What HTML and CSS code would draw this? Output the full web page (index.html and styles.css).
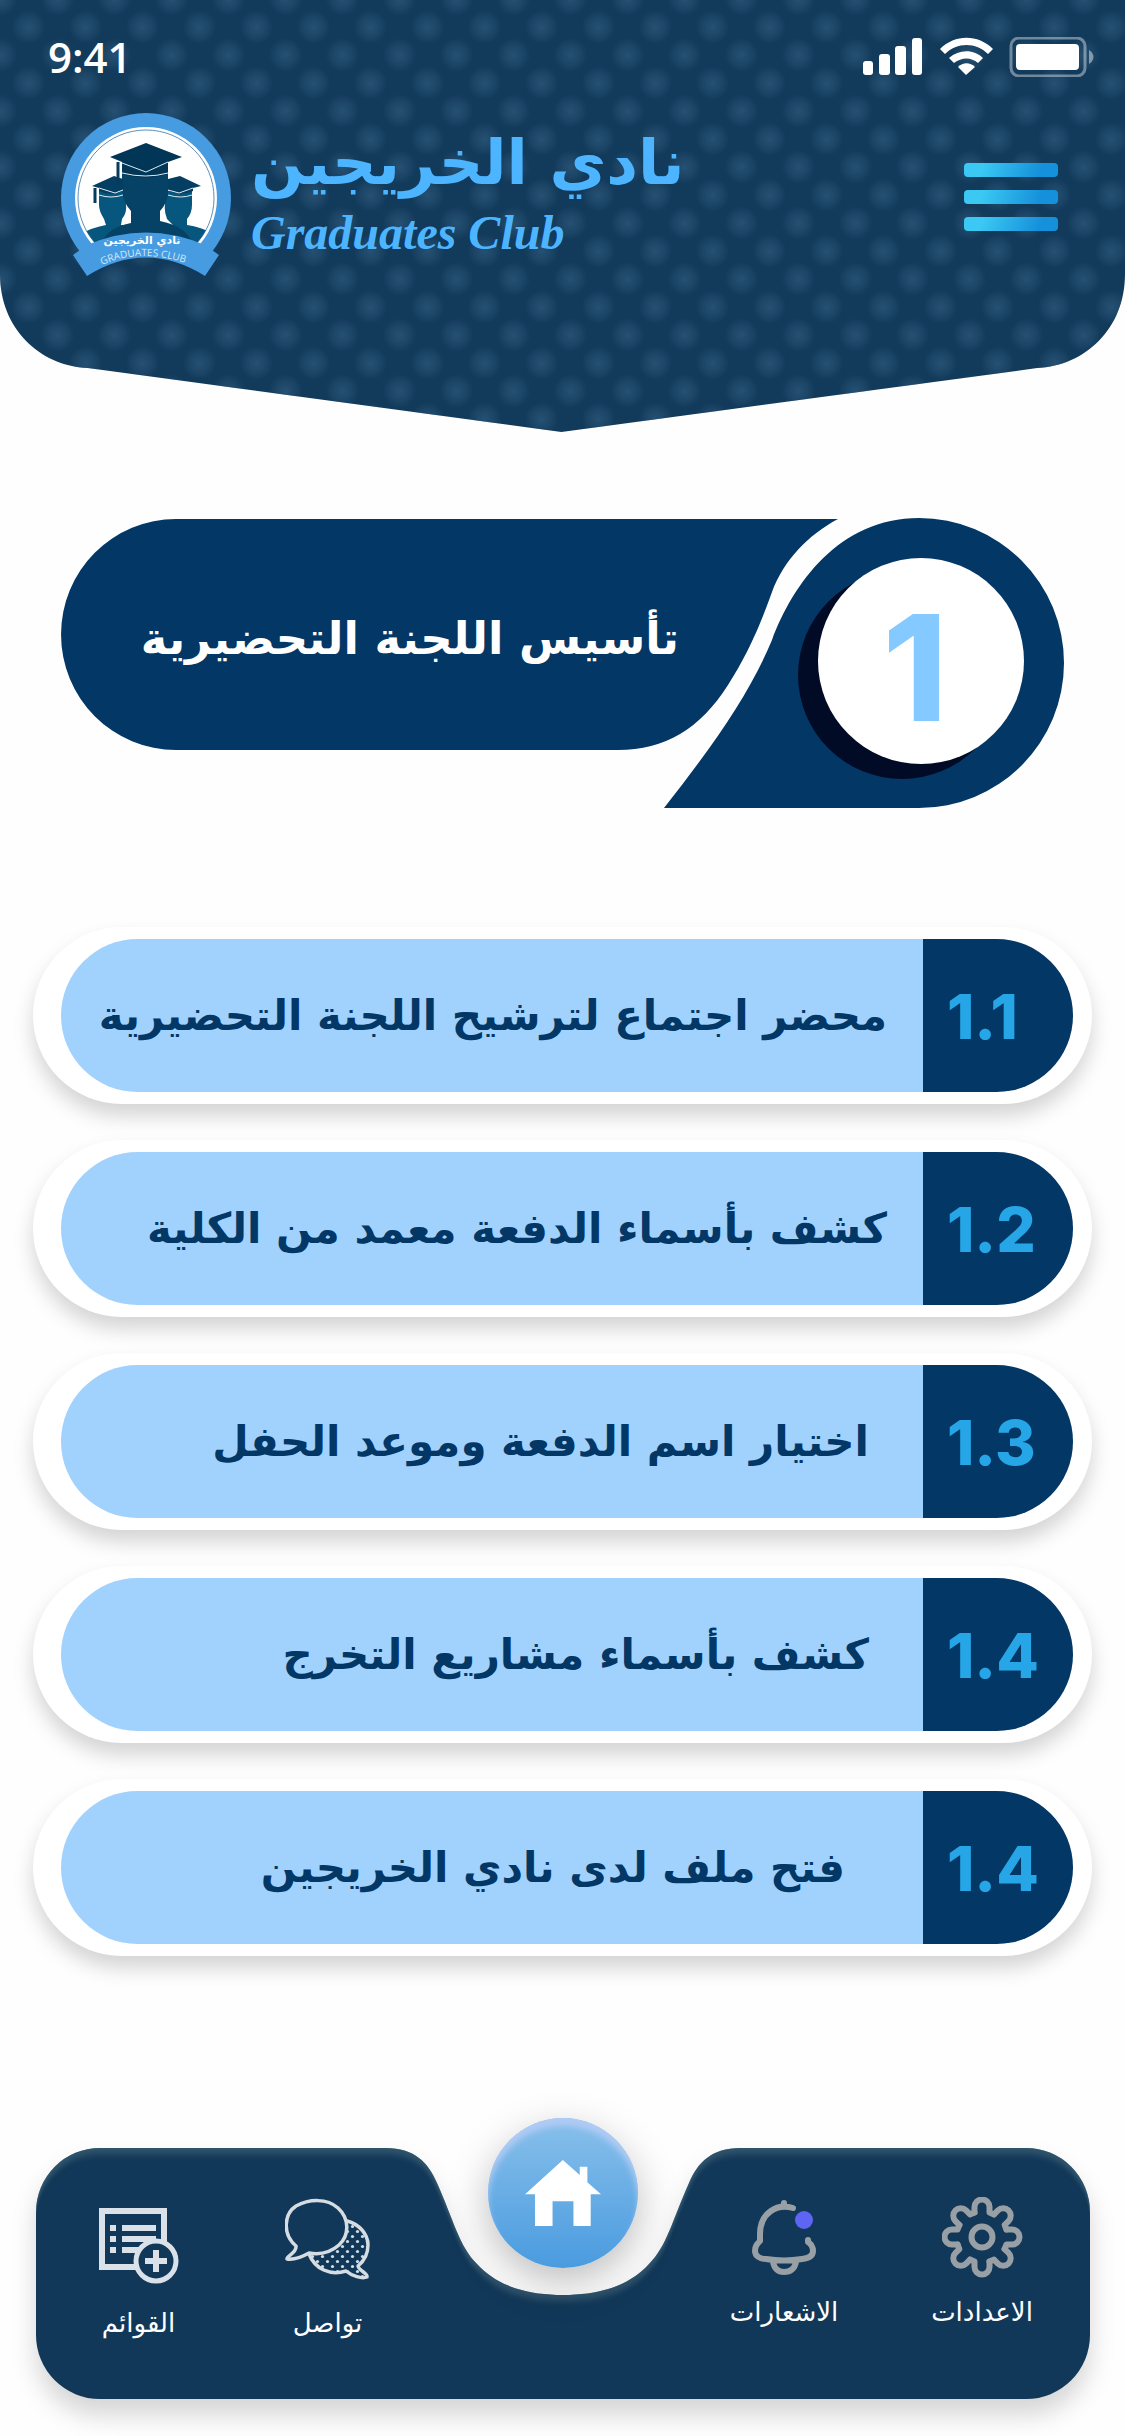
FILE: index.html
```html
<!DOCTYPE html>
<html lang="ar" dir="rtl">
<head>
<meta charset="utf-8">
<meta name="viewport" content="width=device-width, initial-scale=1">
<title>نادي الخريجين</title>
<link rel="stylesheet" href="styles.css">
</head>
<body>
<svg class="defs" width="0" height="0" aria-hidden="true">
  <clipPath id="header-shape" clipPathUnits="objectBoundingBox">
    <path d="M0 0H1V.634C1 .76 .965 .846 .922 .852L.499 1L.078 .852C.035 .846 0 .76 0 .634Z"/>
  </clipPath>
</svg>

<header class="header">
  <div class="status" dir="ltr">
    <span class="time">9:41</span>
    <svg class="signals" viewBox="0 0 231 40" aria-hidden="true">
      <g fill="#fff">
        <rect x="0" y="24" width="10" height="14" rx="3"/>
        <rect x="16" y="17" width="11" height="21" rx="3"/>
        <rect x="32" y="9" width="11" height="29" rx="3"/>
        <rect x="49" y="1" width="10" height="37" rx="3"/>
        <path d="M77 12C92 -3 115 -3 130 12L125 17C113 5 94 5 82 17Z"/>
        <path d="M86 21C96 12 111 12 120 21L115 26C108 20 99 20 91 26Z"/>
        <path d="M95 30C100 25 107 25 112 30L103 38Z"/>
        <rect x="153" y="7" width="63" height="26" rx="4"/>
      </g>
      <rect x="148" y="1" width="74" height="38" rx="8" fill="none" stroke="#fff" stroke-opacity=".4" stroke-width="3"/>
      <path d="M226 13C232 17 232 23 226 27Z" fill="#fff" fill-opacity=".45"/>
    </svg>
  </div>
  <div class="topbar">
    <button class="menu" type="button" aria-label="القائمة"><span></span><span></span><span></span></button>
    <div class="brand">
      <div class="names" dir="ltr">
        <h1 class="name" dir="rtl">نادي الخريجين</h1>
        <p class="latin" lang="en">Graduates Club</p>
      </div>
      <svg class="logo" viewBox="0 0 170 164" role="img" aria-label="شعار نادي الخريجين">
        <defs>
          <clipPath id="disc"><circle cx="85" cy="85" r="68"/></clipPath>
          <clipPath id="above-ribbon"><path d="M0 0H170V140H144Q85 112 26 140H0Z"/></clipPath>
          <path id="arc" d="M41 152Q80 134 130 152"/>
        </defs>
        <g clip-path="url(#above-ribbon)">
          <circle cx="85" cy="85" r="85" fill="#469be1"/>
          <circle cx="85" cy="85" r="71" fill="#fff"/>
          <circle cx="85" cy="85" r="68" fill="none" stroke="#5d8fb8" stroke-width="1"/>
          <g clip-path="url(#disc)">
            <path d="M18 122Q32 114 45 112L43 106Q38 98 38 92V78H65V92Q66 100 61 106L60 112L112 112L106 106Q103 98 104 92V78H131V92Q131 100 126 106V112Q140 114 153 121V164H18Z" fill="#07567d"/>
            <path d="M38 138Q42 115 70 110V98Q61 88 61 76V50H107V76Q108 88 99 98V108Q130 114 134 138Z" fill="#054266"/>
          </g>
        </g>
        <path d="M49 44L85 30L121 44L107 49V61Q85 68 61 61V49Z" fill="#023657"/>
        <path d="M31 73L53 63L62 66V77Q50 84 38 78V75ZM140 73L119 63L107 66V77Q120 84 132 78V75Z" fill="#043e62"/>
        <path d="M61 50L85 59L107 49M61 60Q85 66 107 60M38 75L54 80L62 77M38 82Q50 86 62 82M107 77L118 80L132 75M107 82Q120 86 131 82" fill="none" stroke="#dcebf2"/>
        <path d="M57 49V72M34 75V90" stroke="#043b5e" stroke-width="3"/>
        <path d="M12 142L26 132Q85 107 144 132L158 142L144 163Q85 126 26 163Z" fill="#469be1"/>
        <text class="crest-ar" x="81" y="131" text-anchor="middle">نادي الخريجين</text>
        <text class="crest-en" direction="ltr"><textPath href="#arc">GRADUATES CLUB</textPath></text>
      </svg>
    </div>
  </div>
</header>

<main class="main">
  <section class="banner">
    <svg class="banner-shape" viewBox="0 0 1004 290" preserveAspectRatio="none" aria-hidden="true">
      <path d="M116 1H778C748 17 724 42 712 74C695 122 680 148 668 167C640 211 605 232 558 232H116A115 115.500 0 0 1 116 1Z" fill="#033766"/>
      <path d="M604 290C655 225 690 175 712 122C733 66 779 0 859 0A145 145 0 0 1 859 290Z" fill="#033766"/>
    </svg>
    <div class="banner-number"><span class="disc">1</span></div>
    <h2 class="banner-title">تأسيس اللجنة التحضيرية</h2>
  </section>

  <ul class="steps">
    <li><a class="step" href="#1-1"><span class="num" dir="ltr">1.1</span><span class="label">محضر اجتماع لترشيح اللجنة التحضيرية</span></a></li>
    <li><a class="step" href="#1-2"><span class="num" dir="ltr">1.2</span><span class="label">كشف بأسماء الدفعة معمد من الكلية</span></a></li>
    <li><a class="step" href="#1-3"><span class="num" dir="ltr">1.3</span><span class="label inset">اختيار اسم الدفعة وموعد الحفل</span></a></li>
    <li><a class="step" href="#1-4"><span class="num" dir="ltr">1.4</span><span class="label inset">كشف بأسماء مشاريع التخرج</span></a></li>
    <li><a class="step" href="#1-5"><span class="num" dir="ltr">1.4</span><span class="label inset-deep">فتح ملف لدى نادي الخريجين</span></a></li>
  </ul>
</main>

<nav class="nav">
  <svg class="nav-shape" viewBox="0 0 1054 251" preserveAspectRatio="none" aria-hidden="true">
    <defs>
      <filter id="rim" x="-5%" y="-10%" width="110%" height="130%" color-interpolation-filters="sRGB">
        <feOffset in="SourceAlpha" dy="6"/>
        <feGaussianBlur stdDeviation="0 3" result="shifted"/>
        <feComposite in="SourceAlpha" in2="shifted" operator="out" result="edge"/>
        <feFlood flood-color="#4d6f80" flood-opacity=".5"/>
        <feComposite in2="edge" operator="in" result="light"/>
        <feMerge><feMergeNode in="SourceGraphic"/><feMergeNode in="light"/></feMerge>
      </filter>
    </defs>
    <path filter="url(#rim)" fill="#123859" d="M64 0H350C378 0 392 14 401 35C418 73 423 98 441 116C462 139 493 147 527 147C561 147 592 139 613 116C631 98 636 73 653 35C662 14 676 0 704 0H990A64 64 0 0 1 1054 64V187A64 64 0 0 1 990 251H64A64 64 0 0 1 0 187V64A64 64 0 0 1 64 0Z"/>
  </svg>
  <a class="tab" href="#settings">
    <svg width="81" height="81" viewBox="-40 -40 81 81" fill="none" stroke="#989fa5" stroke-width="6" stroke-linecap="round" stroke-linejoin="round" aria-hidden="true">
      <defs><path id="tooth" d="M-7.500 -24.500V-30A7.500 7.500 0 0 1 7.500 -30V-24.500L12 -22.600"/></defs>
      <use href="#tooth"/><use href="#tooth" transform="rotate(45)"/><use href="#tooth" transform="rotate(90)"/><use href="#tooth" transform="rotate(135)"/><use href="#tooth" transform="rotate(180)"/><use href="#tooth" transform="rotate(225)"/><use href="#tooth" transform="rotate(270)"/><use href="#tooth" transform="rotate(315)"/>
      <circle r="10.500"/>
    </svg>
    <span>الاعدادات</span>
  </a>
  <a class="tab" href="#alerts">
    <svg width="65" height="81" viewBox="0 -3 65 81" fill="none" stroke="#989fa5" stroke-width="6" stroke-linecap="round" stroke-linejoin="round" aria-hidden="true">
      <path d="M41 8C25 3 8 13 8 34V41C5 44 3 46 3 51C3 56 8 59 14 59Q32 62 50 59C58 58 61 55 61 51C61 46 59 44 56 42V40M32 3V6M21 62Q23 72 32 72Q42 72 44 62"/>
      <circle cx="52" cy="20" r="9" fill="#5d65f2" stroke="none"/>
    </svg>
    <span>الاشعارات</span>
  </a>
  <a class="home" href="#home" aria-label="الرئيسية">
    <svg width="76" height="66" viewBox="378 205 229 199" fill="#fff" aria-hidden="true">
      <path d="M378 308L492 205L543 250V225H566V272L607 308H576V404H524V329H461V404H408V308Z"/>
    </svg>
  </a>
  <a class="tab low contact" href="#contact">
    <svg width="85" height="87" viewBox="0 -2 85 87" fill="none" stroke="#d5dde3" stroke-width="3.500" stroke-linejoin="round" aria-hidden="true">
      <defs><pattern id="dots" width="10" height="10" patternUnits="userSpaceOnUse"><circle cx="2.500" cy="2.500" r="1.600" fill="#d5dde3" stroke="none"/><circle cx="7.500" cy="7.500" r="1.600" fill="#d5dde3" stroke="none"/></pattern></defs>
      <path fill="url(#dots)" d="M62 22C74 25 83 35 83 46C83 55 79 62 73 67C74 72 83 74 82 78C77 80 67 77 61 72C45 77 30 70 24 55Z"/>
      <path fill="#123859" d="M11 47C-3 35 -1 15 11 7C24 0 42 -1 53 9C64 19 65 36 54 46C46 53 35 56 24 54C17 58 9 61 2 60C1 57 12 54 11 47Z"/>
    </svg>
    <span>تواصل</span>
  </a>
  <a class="tab low" href="#lists">
    <svg width="80" height="87" viewBox="0 -11 80 87" fill="#dbe1e8" aria-hidden="true">
      <path fill-rule="evenodd" d="M0 0H68V62H0ZM6 6V56H62V6Z"/>
      <path d="M11 17h6v6h-6zM11 28h6v6h-6zM11 39h6v6h-6zM23 17h34v6h-34zM23 28h34v6h-34zM23 39h20v6h-20z"/>
      <circle cx="57" cy="53" r="20" fill="#123859" stroke="#dbe1e8" stroke-width="5"/>
      <path d="M54 42h6v8h8v6h-8v8h-6v-8h-8v-6h8z"/>
    </svg>
    <span>القوائم</span>
  </a>
</nav>
</body>
</html>
```
FILE: styles.css
```css
* { box-sizing: border-box; }

body {
  margin: 0;
  min-height: 100vh;
  display: flex;
  flex-direction: column;
  background: #fefefe;
  font-family: "DejaVu Sans", "Noto Sans", sans-serif;
}

h1, h2, p, ul { margin: 0; padding: 0; }
a { color: inherit; text-decoration: none; }
.defs { position: absolute; }

/* Header */
.header {
  padding: 36px 31px 155px 48px;
  background-color: #123a5b;
  background-image:
    radial-gradient(circle, rgba(62, 108, 142, .45) 0, rgba(54, 98, 132, .3) 9px, transparent 17px),
    radial-gradient(circle, rgba(62, 108, 142, .45) 0, rgba(54, 98, 132, .3) 9px, transparent 17px);
  background-size: 57px 56px;
  background-position: -28px 27px, 0 -1px;
  clip-path: url(#header-shape);
}

.status {
  display: flex;
  justify-content: space-between;
  align-items: center;
  height: 42px;
}

.time { font: 600 42px/42px "Open Sans", "Noto Sans", sans-serif; color: #fff; }
.signals { width: 231px; height: 40px; }

.topbar {
  display: flex;
  justify-content: space-between;
  align-items: center;
  height: 164px;
  margin-top: 35px;
  padding: 0 36px 0 13px;
}

.menu {
  display: flex;
  flex-direction: column;
  gap: 13px;
  padding: 4px 0 0;
  border: 0;
  background: none;
}

.menu span {
  width: 94px;
  height: 14px;
  border-radius: 4px;
  background: linear-gradient(110deg, #3bc8f3 20%, #1590da 80%);
}

.brand { display: flex; align-items: center; gap: 20px; color: #4db5ff; }
.logo { width: 170px; height: 164px; }
.names { display: flex; flex-direction: column; align-items: flex-start; padding-bottom: 8px; }
.name { font-size: 62px; line-height: 84px; white-space: nowrap; }
.latin { font: italic bold 48px/56px "Liberation Serif", serif; }
.crest-ar { font: bold 11px "DejaVu Sans", sans-serif; fill: #fff; }
.crest-en { font: 10px "Open Sans", sans-serif; fill: #d5e9fa; }

/* Section banner */
.main { padding: 86px 33px 120px; }

.banner {
  position: relative;
  display: flex;
  align-items: flex-start;
  height: 290px;
  margin: 0 28px 0 27px;
}

.banner-shape { position: absolute; inset: 0; width: 100%; height: 100%; }

.banner-number {
  position: relative;
  display: flex;
  flex: none;
  padding: 40px 40px 0 0;
}

.disc {
  width: 206px;
  height: 206px;
  padding-right: 12px;
  border-radius: 50%;
  background: #fff;
  box-shadow: -19px 14px 0 1px #020b26;
  color: #84c9ff;
  font: 800 147px/220px Inter, "Noto Sans", sans-serif;
  text-align: center;
}

.banner-title {
  position: relative;
  flex: 1;
  padding-right: 139px;
  color: #fff;
  font-size: 45px;
  line-height: 242px;
  white-space: nowrap;
}

/* Steps */
.steps {
  display: grid;
  gap: 36px;
  margin-top: 119px;
  list-style: none;
}

.step {
  display: flex;
  height: 177px;
  padding: 12px 19px 12px 28px;
  border-radius: 89px;
  background: #fff;
  box-shadow: 0 12px 20px rgba(0, 0, 0, .17);
}

.num {
  width: 150px;
  padding-left: 24px;
  border-radius: 0 77px 77px 0;
  background: #033766;
  color: #26a6e6;
  font: 800 62px/155px Inter, "Noto Sans", sans-serif;
}

.label {
  flex: 1;
  padding-right: 36px;
  border-radius: 77px 0 0 77px;
  background: #a1d2fd;
  color: #033766;
  font-weight: bold;
  font-size: 42px;
  line-height: 153px;
  white-space: nowrap;
}

.inset { padding-right: 54px; }
.inset-deep { padding-right: 78px; }

/* Bottom navigation */
.nav {
  position: relative;
  display: grid;
  grid-template-columns: 198fr 198fr 263fr 189fr 189fr;
  height: 251px;
  margin: auto 35px 37px 36px;
  padding: 49px 9px 0 8px;
}

.nav-shape {
  position: absolute;
  inset: 0;
  width: 100%;
  height: 100%;
  overflow: visible;
  filter: drop-shadow(0 16px 12px rgba(0, 0, 0, .16));
}

.tab {
  position: relative;
  display: flex;
  flex-direction: column;
  align-items: center;
  gap: 14px;
  color: #fff;
  font-size: 26px;
  line-height: 40px;
}

.low { gap: 19px; }
.contact { grid-column: 4; }

/* Round button floating over the notch */
.home {
  position: absolute;
  top: -30px;
  left: calc(50% - 75px);
  display: flex;
  align-items: center;
  justify-content: center;
  width: 150px;
  height: 150px;
  border-radius: 50%;
  background: linear-gradient(#88c0eb, #4a9bdf);
  box-shadow: inset 0 8px 6px #b0cbf4, 0 14px 40px rgba(0, 0, 0, .26);
}
```
